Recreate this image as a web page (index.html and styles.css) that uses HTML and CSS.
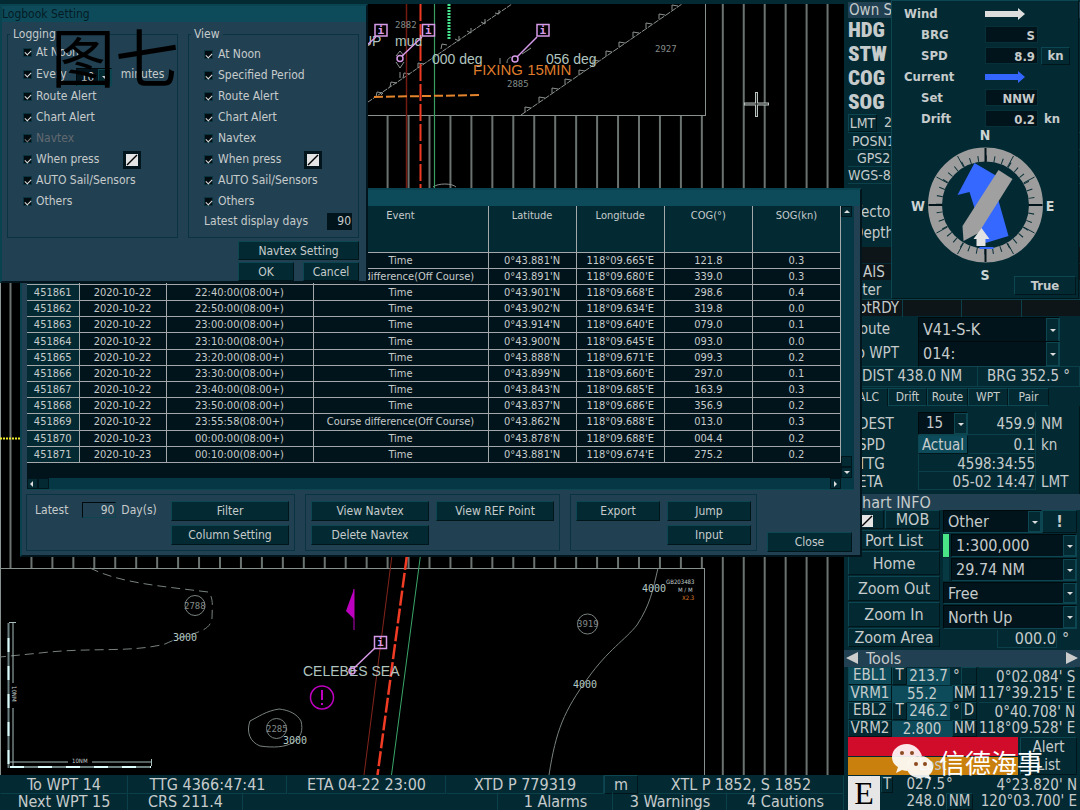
FILE: index.html
```html
<!DOCTYPE html>
<html lang="en">
<head>
<meta charset="utf-8">
<title>ECDIS</title>
<link rel="stylesheet" href="styles.css">
</head>
<body>
<div class="app">
  <main class="chart">
    <svg class="chart-map" viewBox="0 0 844 775" preserveAspectRatio="xMinYMin slice" aria-label="Chart">
      <defs>
        <pattern id="hatch" x="9.5" y="0" width="20.95" height="10" patternUnits="userSpaceOnUse"><path d="M1 0V10" stroke="#a3b0ac" stroke-width="1.300"/></pattern>
      </defs>
      <rect width="844" height="775" fill="#000"/>
      <rect y="4" width="842" height="771" fill="url(#hatch)"/>
      <path d="M.5 4V775" stroke="#8a9794"/>
      <rect x="-2" y="3.500" width="707.500" height="112" fill="#000" stroke="#87918f"/>
      <rect x=".5" y="568.500" width="704" height="210" fill="#000" stroke="#87918f"/>
      <path d="M0 438.500H20" stroke="#f2ee2b" stroke-width="2" stroke-dasharray="2 1"/>
      <g fill="none" stroke="#8b9290" stroke-width="1">
        <path d="M368 102L512 4" stroke-dasharray="5 1"/>
        <path d="M376 97l1-5 6 1-2 2M390 87l1-5 6 1M403 78l1-5 6 1M418 68l0-5 6 1M441 49l1-5 5 1M455 39l4 2 0-5M467 31l4 2 0-5M481 22l4 2 0-5M495 13l4 1 0-4"/>
        <path d="M521 115L682 4" stroke-dasharray="6 1"/>
        <path d="M525 112l0-5 6 1M539 102l0-5 6 1M552 93l0-5 6 1M565 84l0-5 6 1M579 75l0-5 6 1M593 65l0-5 6 1M606 56l0-5 6 1M619 47l0-5 6 1M633 37l0-5 6 1M646 28l0-5 6 1M659 19l0-5 6 1M672 10l0-5 6 1"/>
        <path d="M433 187C438 183 452 183 456 187M396 56l4-5 4 5M396 62l4 6 4-6M400 72V78M507 63c0-4 2-5 4-6M522 54l9-6M500 58v6"/>
      </g>
      <path d="M406.500 4V188" stroke="#731a13" stroke-width="1.500"/>
      <path d="M420.500 4V188" stroke="#ef3a23" stroke-width="2" stroke-dasharray="17 3"/>
      <path d="M434.500 4V188" stroke="#3a9d61" stroke-width="1.200"/>
      <path d="M449 4V40" stroke="#44e58c" stroke-width="3" stroke-dasharray="2 1"/>
      <path d="M374 97L479 95" stroke="#e4842d" stroke-width="2" stroke-dasharray="9 3"/>
      <g class="map-depth"><text x="395" y="28">2882</text><text x="507" y="87">2885</text><text x="655" y="52">2927</text></g>
      <g class="map-label"><text x="362" y="46">UP</text><text x="395" y="46">mud</text><text x="432" y="64">000 deg</text><text x="546" y="64">056 deg</text></g>
      <text class="map-fix" x="473" y="75">FIXING 15MIN</text>
      <g fill="none" stroke="#d69ae8" stroke-width="1.500">
        <path d="M367 45L376 37M402 56L422 37M517 57L537 37"/>
        <rect x="375" y="24.500" width="12" height="11.500"/><rect x="422.500" y="24.500" width="12" height="11.500"/><rect x="537" y="24.500" width="12" height="11.500"/>
        <circle cx="400" cy="58.500" r="3"/><circle cx="515" cy="59" r="3"/>
      </g>
      <g class="map-info"><text x="377.500" y="34">i</text><text x="425" y="34">i</text><text x="539.500" y="34">i</text></g>
      <path d="M744 104H769M756.500 92V117" stroke="#b9c4c1" stroke-width="3"/><path d="M745 104H768M756.500 93V116" stroke="#222"/>

      <g fill="none" stroke="#78827f">
        <path d="M90 568C120 583 160 586 208 592C214 597 212 608 212 618C210 634 190 632 165 644C130 653 90 647 40 653L0 657" stroke-dasharray="9 5"/>
        <circle cx="195" cy="605.500" r="10"/><circle cx="276.500" cy="728.500" r="10"/><circle cx="587.500" cy="624" r="10"/>
        <path d="M279 709C266 711 258 717 250 721C246 732 250 742 260 746C274 748 285 747 292 743C302 737 303 730 301 721C297 714 289 710 279 709Z"/>
        <path d="M658 568C653 590 650 605 637 625C625 640 608 650 588 678C564 711 556 730 549 775"/>
      </g>
      <path d="M392 555L364 775" stroke="#83251b"/>
      <path d="M407 555L377.500 775" stroke="#f03b25" stroke-width="2.500" stroke-dasharray="15 3"/>
      <path d="M420.500 555L391.500 775" stroke="#3aa66a"/>
      <g class="map-depth"><text x="184" y="609">2788</text><text x="266" y="732">2285</text><text x="577" y="627">3919</text></g>
      <g class="map-contour"><text x="173" y="641">3000</text><text x="283" y="744">3000</text><text x="642" y="592">4000</text><text x="573" y="688">4000</text></g>
      <g class="map-cell"><text x="666" y="584">GB203483</text><text x="678" y="592">M / M</text><text x="682" y="600" class="map-scale">X2.3</text></g>
      <text class="map-label map-sea" x="303" y="676">CELEBES SEA</text>
      <g fill="none" stroke="#d69ae8" stroke-width="1.500"><path d="M353 669L375 648"/><rect x="374.500" y="636.500" width="12" height="12"/><circle cx="352" cy="671" r="3"/></g>
      <text class="map-info" x="377" y="646">i</text>
      <path d="M354 589L346 611L354 619Z" fill="#bd00c0"/><path d="M354 589V630" stroke="#bd00c0"/>
      <g fill="none" stroke="#bd00c0" stroke-width="1.500"><circle cx="322" cy="697.500" r="11.500"/><path d="M322 690V700M322 703V705" stroke-width="2"/></g>
      <g stroke="#a7bdbc" fill="none">
        <path d="M8.500 623V768" stroke="#6c8080" stroke-width="2"/><path d="M8.500 638V768" stroke="#dff" stroke-width="2" stroke-dasharray="14 14"/>
        <path d="M9 622.500H16M13 623V683M13 708V768M9 762H68M92 762H151M151.500 759V766"/>
        <path d="M10 767H151" stroke="#6c8080" stroke-width="2"/><path d="M10 767H151" stroke="#dff" stroke-width="2" stroke-dasharray="14 14"/>
      </g>
      <g class="map-cell"><text x="72" y="763">10NM</text><text transform="translate(12 686) rotate(90)">10NM</text></g>
    </svg>
  </main>

  <aside class="side">
    <h2 class="head own">Own Ship</h2>
    <div class="motion"><b>HDG</b><b>STW</b><b>COG</b><b>SOG</b></div>
    <div class="line lmt"><button>LMT</button><span>2020</span></div>
    <div class="line in8">POSN1</div>
    <div class="line in13">GPS2</div>
    <div class="line">WGS-84</div>
    <div class="line gap in8">Vector</div>
    <div class="line in8 depth">Depth</div>
    <div class="dark"></div>
    <div class="dark ais">AIS</div>
    <div class="line filter">Filter</div>
    <div class="dark ready"><span>NotRDY</span><i></i><i></i><i></i></div>
    <div class="pick"><label for="route">Route</label><span class="sel"><select id="route"><option>V41-S-K</option></select></span></div>
    <div class="pick"><label for="wpt">To WPT</label><span class="sel"><select id="wpt"><option>014:</option></select></span></div>
    <div class="dist"><span>DIST 438.0 NM</span><span>BRG 352.5 °</span></div>
    <nav class="tabs"><button class="on">CALC</button><button>Drift</button><button>Route</button><button>WPT</button><button>Pair</button></nav>
    <section class="calc">
      <label for="dest">DEST</label><span class="sel"><select id="dest"><option>15</option></select></span><output class="first">459.9</output><span class="first">NM</span>
      <span class="name">SPD</span><button class="actual">Actual</button><output>0.1</output><span>kn</span>
      <span class="name">TTG</span><output class="wide">4598:34:55</output><span></span>
      <span class="name">ETA</span><output class="wide">05-02 14:47</output><span>LMT</span>
    </section>
    <h2 class="head">Chart INFO</h2>
    <section class="info">
      <div class="info-left">
        <div class="mob"><button aria-label="Note"><svg width="12" height="12" viewBox="0 0 12 12"><rect width="12" height="12" fill="#e4e4e4"/><path d="M1 11L11 1" stroke="#000" stroke-width="1.500"/></svg></button><button>MOB</button></div>
        <button>Port List</button><button>Home</button><button>Zoom Out</button><button>Zoom In</button><button>Zoom Area</button>
      </div>
      <div class="info-right">
        <div class="pair"><span class="sel"><select aria-label="Layer"><option>Other</option></select></span><button class="bang">!</button></div>
        <div class="scale on"><span class="sel"><select aria-label="Scale"><option>1:300,000</option></select></span></div>
        <div class="scale"><span class="sel"><select aria-label="Range"><option>29.74 NM</option></select></span></div>
        <span class="sel"><select aria-label="Motion"><option>Free</option></select></span>
        <span class="sel"><select aria-label="Orientation"><option>North Up</option></select></span>
        <div class="heading"><output>000.0</output><span>°</span></div>
      </div>
    </section>
    <div class="tools"><button aria-label="Previous"><svg width="12" height="12" viewBox="0 0 12 12"><path d="M0 6L12 0V12Z" fill="#ccc"/></svg></button><h2>Tools</h2><button aria-label="Next"><svg width="12" height="12" viewBox="0 0 12 12"><path d="M12 6L0 0V12Z" fill="#ccc"/></svg></button></div>
    <section class="ebl">
      <div class="ebl-rows">
        <div class="e-row"><button class="lit">EBL1</button><button>T</button><output class="lit">213.7</output><span>°</span><button aria-label="Mode"></button></div>
        <div class="v-row"><button class="lit">VRM1</button><output class="lit">55.2</output><button>NM</button></div>
        <div class="e-row"><button>EBL2</button><button>T</button><output class="lit">246.2</output><span>°</span><button>D</button></div>
        <div class="v-row"><button>VRM2</button><output class="lit">2.800</output><button>NM</button></div>
      </div>
      <div class="pos"><p>0°02.084' S<br>117°39.215' E</p><p>0°40.708' N<br>118°09.528' E</p></div>
    </section>
    <section class="alert"><div class="bars"><div class="red"></div><div class="amber">Lost</div></div><button>Alert<br>List</button></section>
    <section class="cursor"><b>E</b><div class="cur-val"><div><button>T</button><output>027.5</output><span>°</span></div><div><output>248.0</output><button>NM</button></div></div><p>4°23.820' N<br>120°03.700' E</p></section>
  </aside>

  <footer class="status">
    <div class="st-one"><span>To WPT 14</span><span>TTG 4366:47:41</span><span>ETA 04-22 23:00</span><span>XTD P 779319</span><button>m</button><span>XTL P 1852, S 1852</span></div>
    <div class="st-two"><span>Next WPT 15</span><span>CRS 211.4</span><span></span><span>1 Alarms</span><span>3 Warnings</span><span>4 Cautions</span></div>
  </footer>

  <section class="win logbook" aria-label="Logbook">
    <div class="win-title"></div>
    <div class="grid-box">
      <div class="grid-area">
        <table>
          <colgroup><col class="c-no"><col class="c-date"><col class="c-time"><col class="c-event"><col><col><col><col></colgroup>
          <thead><tr><th>No.</th><th>Date</th><th>Time</th><th>Event</th><th>Latitude</th><th>Longitude</th><th>COG(°)</th><th>SOG(kn)</th></tr></thead>
          <tbody>
            <tr><th>451859</th><td>2020-10-22</td><td>22:30:00(08:00+)</td><td>Time</td><td>0°43.881'N</td><td>118°09.665'E</td><td>121.8</td><td>0.3</td></tr>
            <tr><th>451860</th><td>2020-10-22</td><td>22:35:00(08:00+)</td><td>Course difference(Off Course)</td><td>0°43.891'N</td><td>118°09.680'E</td><td>339.0</td><td>0.3</td></tr>
            <tr><th>451861</th><td>2020-10-22</td><td>22:40:00(08:00+)</td><td>Time</td><td>0°43.901'N</td><td>118°09.668'E</td><td>298.6</td><td>0.4</td></tr>
            <tr><th>451862</th><td>2020-10-22</td><td>22:50:00(08:00+)</td><td>Time</td><td>0°43.902'N</td><td>118°09.634'E</td><td>319.8</td><td>0.0</td></tr>
            <tr><th>451863</th><td>2020-10-22</td><td>23:00:00(08:00+)</td><td>Time</td><td>0°43.914'N</td><td>118°09.640'E</td><td>079.0</td><td>0.1</td></tr>
            <tr><th>451864</th><td>2020-10-22</td><td>23:10:00(08:00+)</td><td>Time</td><td>0°43.900'N</td><td>118°09.645'E</td><td>093.0</td><td>0.0</td></tr>
            <tr><th>451865</th><td>2020-10-22</td><td>23:20:00(08:00+)</td><td>Time</td><td>0°43.888'N</td><td>118°09.671'E</td><td>099.3</td><td>0.2</td></tr>
            <tr><th>451866</th><td>2020-10-22</td><td>23:30:00(08:00+)</td><td>Time</td><td>0°43.899'N</td><td>118°09.660'E</td><td>297.0</td><td>0.1</td></tr>
            <tr><th>451867</th><td>2020-10-22</td><td>23:40:00(08:00+)</td><td>Time</td><td>0°43.843'N</td><td>118°09.685'E</td><td>163.9</td><td>0.3</td></tr>
            <tr><th>451868</th><td>2020-10-22</td><td>23:50:00(08:00+)</td><td>Time</td><td>0°43.837'N</td><td>118°09.686'E</td><td>356.9</td><td>0.2</td></tr>
            <tr><th>451869</th><td>2020-10-22</td><td>23:55:58(08:00+)</td><td>Course difference(Off Course)</td><td>0°43.862'N</td><td>118°09.688'E</td><td>013.0</td><td>0.3</td></tr>
            <tr><th>451870</th><td>2020-10-23</td><td>00:00:00(08:00+)</td><td>Time</td><td>0°43.878'N</td><td>118°09.688'E</td><td>004.4</td><td>0.2</td></tr>
            <tr><th>451871</th><td>2020-10-23</td><td>00:10:00(08:00+)</td><td>Time</td><td>0°43.881'N</td><td>118°09.674'E</td><td>275.2</td><td>0.2</td></tr>
          </tbody>
        </table>
        <div class="vbar"><i class="up"></i><i class="thumb"></i><i class="down"></i></div>
      </div>
      <div class="hbar"><i class="left"></i><i class="thumb"></i><i class="right"></i></div>
    </div>
    <div class="actions">
      <div class="group g-filter"><label for="days">Latest</label><input id="days" class="days" value="90"><span>Day(s)</span><div class="stack"><button>Filter</button><button>Column Setting</button></div></div>
      <div class="group g-view"><div class="stack"><button>View Navtex</button><button>Delete Navtex</button></div><div class="stack"><button>View REF Point</button></div></div>
      <div class="group g-out"><div class="stack"><button>Export</button></div><div class="stack"><button>Jump</button><button>Input</button></div></div>
      <button class="close">Close</button>
    </div>
  </section>

  <section class="win setting" aria-label="Logbook Setting">
    <h2 class="win-title">Logbook Setting</h2>
    <div class="sets">
      <fieldset class="logging">
        <legend>Logging</legend>
        <label><input type="checkbox" checked>At Noon</label>
        <div class="every"><label><input type="checkbox" checked>Every</label><span class="sel mini"><select aria-label="Interval"><option>10</option></select></span><span>minutes</span></div>
        <label><input type="checkbox" checked>Route Alert</label>
        <label><input type="checkbox" checked>Chart Alert</label>
        <label class="off"><input type="checkbox" checked disabled>Navtex</label>
        <label class="press"><input type="checkbox" checked>When press<svg width="18" height="18" viewBox="0 0 18 18"><rect width="18" height="18" fill="#02151c"/><rect x="3" y="3" width="12" height="12" fill="#e4e4e4"/><path d="M4 14L14 4" stroke="#000" stroke-width="1.500"/></svg></label>
        <label><input type="checkbox" checked>AUTO Sail/Sensors</label>
        <label><input type="checkbox" checked>Others</label>
      </fieldset>
      <fieldset class="view">
        <legend>View</legend>
        <label><input type="checkbox" checked>At Noon</label>
        <label><input type="checkbox" checked>Specified Period</label>
        <label><input type="checkbox" checked>Route Alert</label>
        <label><input type="checkbox" checked>Chart Alert</label>
        <label><input type="checkbox" checked>Navtex</label>
        <label class="press"><input type="checkbox" checked>When press<svg width="18" height="18" viewBox="0 0 18 18"><rect width="18" height="18" fill="#02151c"/><rect x="3" y="3" width="12" height="12" fill="#e4e4e4"/><path d="M4 14L14 4" stroke="#000" stroke-width="1.500"/></svg></label>
        <label><input type="checkbox" checked>AUTO Sail/Sensors</label>
        <label><input type="checkbox" checked>Others</label>
        <label class="latest">Latest display days<input value="90"></label>
      </fieldset>
    </div>
    <div class="set-btns"><button class="full">Navtex Setting</button><button>OK</button><button>Cancel</button></div>
  </section>

  <section class="wind" aria-label="Wind and current">
    <div class="w-grid">
      <b>Wind</b><svg width="40" height="12" viewBox="0 0 40 12"><path d="M0 3H33V0L40 6L33 12V9H0Z" fill="#ddd"/></svg><span></span>
      <b class="sub">BRG</b><output>S</output><span></span>
      <b class="sub">SPD</b><output>8.9</output><button>kn</button>
      <b>Current</b><svg width="40" height="12" viewBox="0 0 40 12"><path d="M0 3H33V0L40 6L33 12V9H0Z" fill="#3366ff"/></svg><span></span>
      <b class="sub">Set</b><output>NNW</output><span></span>
      <b class="sub">Drift</b><output>0.2</output><b class="unit">kn</b>
    </div>
    <svg class="compass" viewBox="0 0 186 154" aria-label="Compass">
      <g transform="translate(93.500 77)">
        <circle r="50.500" fill="none" stroke="#9d9d9d" stroke-width="14"/>
        <circle r="46.500" fill="none" stroke="#0b3037" stroke-width="6" stroke-dasharray="1 7.116"/>
        <g stroke="#0b3037"><path d="M22 -38L28 -49M38 -22L49 -28M22 38L28 49M38 22L49 28M-22 38L-28 49M-38 22L-49 28M-22 -38L-28 -49M-38 -22L-49 -28"/></g>
        <path d="M0 -57V-43M0 57V43M-57 0H-43M57 0H43" stroke="#02141b" stroke-width="2"/>
        <path d="M-11 -42L18 -25L8 -22L23 31L0 38L-16 -13L-28 -10ZM-6 42H8V44H-6Z" fill="#3568ff"/>
        <path d="M13 -35L27 -26L-7 28L-22 36L-23 21Z" fill="#a0a0a0"/>
        <path d="M-4 23L4 34H0V41H-9V34H-12Z" fill="#e2e2e2"/>
      </g>
      <g class="card"><text x="93" y="12">N</text><text x="26" y="83">W</text><text x="158" y="83">E</text><text x="93" y="152">S</text></g>
    </svg>
    <button class="true">True</button>
  </section>

  <div class="stamp" lang="zh">图七</div>
  <div class="brand" lang="zh"><svg width="44" height="37" viewBox="0 0 44 37"><g fill="#fff" fill-opacity=".9"><path d="M16 1C7 1 1 7 1 14C1 18 3 22 7 24L5 30L11 27Q14 28 17 28C15 20 20 13 31 13C29 6 23 1 16 1Z"/><path d="M29 13C21 13 16 18 16 24C16 31 22 35 29 35Q32 35 34 34L40 37L38 32C41 30 42 27 42 24C42 18 36 13 29 13Z"/></g><g fill="#8c4a20"><circle cx="11" cy="10" r="2"/><circle cx="21" cy="10" r="2"/><circle cx="25" cy="21" r="2"/><circle cx="34" cy="21" r="2"/></g></svg><span>信德海事</span></div>
</div>
</body>
</html>
```

FILE: styles.css
```css
:root {
  --panel: #032a33;
  --deep: #02141b;
  --slate: #214052;
  --teal: #0d4b5b;
  --edge: #0b3f49;
  --text: #c6cbcb;
}
* { box-sizing: border-box; }
body { margin: 0; background: #000; color: var(--text); font: 16px/17px "DejaVu Sans Condensed", "Noto Sans", sans-serif; }
h2, p { margin: 0; font: inherit; }
i { font-style: normal; }
button {
  margin: 0; padding: 0; border: 1px solid; border-color: #0c4651 #01161b #01161b #0c4651;
  background: var(--panel); color: inherit; font: inherit; white-space: nowrap; overflow: hidden;
}
input, select { font: inherit; color: inherit; margin: 0; }
output { display: block; text-align: right; }
.app {
  position: relative; min-height: 100vh; overflow: hidden; background: var(--panel);
  display: grid; grid-template-columns: minmax(0, 1fr) 236px; grid-template-rows: minmax(0, 1fr) 35px;
}
.chart { position: relative; overflow: hidden; border-top: 4px solid var(--panel); }
.chart-map { position: absolute; left: 0; top: -4px; width: 844px; height: 775px; }
.map-depth { font: 9px "DejaVu Sans Mono", monospace; fill: #838b89; }
.map-contour { font: 10px "DejaVu Sans Mono", monospace; fill: #b4c8c4; }
.map-label { font: 14px "Liberation Sans", sans-serif; fill: #b0c4bf; }
.map-fix { font: 15px "Liberation Sans", sans-serif; fill: #df7b2b; }
.map-info { font: bold 11px "DejaVu Sans Mono", monospace; fill: #d69ae8; }
.map-cell { font: 6px "DejaVu Sans Condensed", sans-serif; fill: #c0cccb; }
.map-scale { fill: #df7b2b; }

/* drop-downs */
.sel { position: relative; display: block; min-width: 0; background: var(--deep); border: 1px solid; border-color: #00090c #0d4651 #0d4651 #00090c; }
.sel select { display: block; width: 100%; height: 100%; padding: 0 12px 0 4px; border: 0; background: none; appearance: none; }
.sel::before { content: ""; position: absolute; right: 0; top: 0; bottom: 0; width: 11px; background: var(--panel); border: 1px solid #0c4651; pointer-events: none; }
.sel::after { content: ""; position: absolute; right: 3px; top: 50%; margin-top: -1px; border: 3px solid transparent; border-top-color: #ddd; border-bottom: 0; pointer-events: none; }

/* right-hand column */
.side { grid-row: 1 / 3; grid-column: 2; display: flex; flex-direction: column; padding-left: 4px; border-top: 2px solid var(--panel); background: var(--panel); overflow: hidden; white-space: nowrap; }
.side > * { flex: none; }
.head { height: 16px; line-height: 17px; background: var(--slate); padding-left: 4px; }
.own { padding-left: 1px; font-size: 15px; line-height: 16px; }
.motion { display: grid; grid-auto-rows: 24px; font: bold 21px/24px "Liberation Sans Narrow", "Roboto Condensed", sans-serif; }
.line { height: 17px; line-height: 17px; font-size: 14px; border-bottom: 1px solid var(--edge); }
.in8 { padding-left: 4px; } .in13 { padding-left: 9px; }
.lmt { display: flex; gap: 7px; height: 19px; }
.lmt button { width: 29px; }
.gap { margin-top: 20px; height: 20px; font-size: 15px; border: 0; }
.depth { height: 21px; font-size: 15px; line-height: 18px; border: 0; }
.gap, .depth { padding-left: 5px; }
.dark { height: 16px; margin-top: 2px; background: #0d1519; }
.ais { padding-left: 15px; margin-top: 1px; font-size: 15px; }
.filter { height: 20px; font-size: 15px; line-height: 21px; }
.ready { display: grid; grid-template-columns: 54px 1fr 1fr 1fr; margin: 0; line-height: 17px; }
.ready i { border-left: 1px solid var(--edge); }
.ready span { text-align: right; padding-right: 3px; font-size: 15px; }
.pick { display: grid; grid-template-columns: 70px 1fr 20px; height: 24px; line-height: 24px; padding: 1px 0; }
.pick label { padding-left: 3px; font-size: 15px; }
.dist { display: grid; grid-template-columns: 130px 1fr; height: 20px; margin-top: 2px; line-height: 19px; font-size: 15px; }
.dist span { padding-left: 14px; border: 1px solid var(--edge); border-left-width: 0; }
.dist span + span { padding-left: 9px; }
.tabs { display: grid; grid-template-columns: 40px 39px 41px 40px 41px; height: 18px; margin-top: 2px; font-size: 12px; }
.tabs button { border-bottom-color: #0c4651; }
.tabs .on { text-align: right; padding-right: 8px; border-bottom: 0; }
.calc { display: grid; grid-template-columns: 70px 50px 68px 1fr; grid-template-rows: 23px 19px 18px 18px; height: 88px; padding-top: 6px; line-height: 21px; font-size: 15px; border-right: 1px solid #01161b; }
.calc > label, .calc > .name { padding-left: 10px; }
.calc > label, .calc > .first { line-height: 25px; }
.calc > span { padding-left: 5px; }
.calc > span.sel { padding: 0; }
.calc .sel select { padding-left: 7px; }
.calc output { border: 1px solid var(--edge); border-width: 0 1px 1px 0; height: 100%; }
.calc .wide { grid-column: 2 / 4; border-left-width: 1px; }
.calc .wide, .calc .wide + span, .calc .name { line-height: 20px; }
.calc .actual { background: var(--teal); line-height: 16px; }
.info { display: grid; grid-template-columns: 92px 1fr; gap: 3px; height: 140px; padding-right: 3px; }
.info-left { display: grid; grid-template-rows: 19px 20px 24px 25px 25px 19px; row-gap: 1px; }
.mob { display: grid; grid-template-columns: 36px 1fr; gap: 1px; }
.mob button:first-child { text-align: right; padding-right: 10px; }
.mob svg { vertical-align: -2px; }
.info-right { display: grid; grid-template-rows: 23px 23px 23px 22px 24px 16px; row-gap: 1px; }
.pair { display: grid; grid-template-columns: 1fr 35px; }
.bang { font-weight: bold; }
.scale { border-left: 6px solid #073943; padding-left: 2px; display: grid; }
.scale.on { border-color: #49e587; }
.heading { display: grid; grid-template-columns: 1fr 20px; padding-left: 54px; line-height: 17px; }
.heading output { border: 1px solid var(--edge); border-top: 0; }
.heading span { padding-left: 5px; }
.tools { display: grid; grid-template-columns: 16px 1fr 16px; height: 17px; margin-left: -4px; background: var(--slate); }
.tools button { border: 0; background: none; }
.tools h2 { padding-left: 6px; line-height: 17px; }
.ebl { display: grid; grid-template-columns: 129px 1fr; grid-template-rows: 100%; height: 70px; gap: 2px; padding-right: 5px; }
.ebl-rows { display: grid; grid-template-rows: repeat(4, minmax(0, 1fr)); font-size: 15px; line-height: 18px; }
.ebl-rows > div { display: grid; grid-template-rows: 100%; }
.ebl-rows button { line-height: 15px; }
.e-row { grid-template-columns: 44px 15px 43px 11px 1fr; }
.v-row { grid-template-columns: 44px 60px 1fr; }
.ebl .lit { background: var(--teal); text-align: center; }
output.lit { border-top: 1px solid var(--panel); line-height: 17px; }
.ebl-rows span { padding-left: 3px; }
.pos { display: grid; grid-template-rows: 1fr 1fr; text-align: right; font-size: 15px; line-height: 16px; }
.pos p { border-top: 1px solid var(--edge); padding-top: 1px; }
.alert { display: grid; grid-template-columns: 170px 1fr; grid-template-rows: 100%; gap: 2px; height: 38px; padding-right: 3px; }
.alert button { font-size: 15px; line-height: 18px; }
.bars { display: grid; grid-template-rows: 1fr 1fr; gap: 1px; text-align: center; font-size: 15px; }
.red { background: #d10c2b; } .amber { background: #ca800d; }
.cursor { display: grid; grid-template-columns: 32px 93px 1fr; gap: 1px; height: 34px; margin-top: 1px; font-size: 15px; line-height: 17px; padding-right: 3px; }
.cursor > b { background: #e6e6e6; color: #000; font: 32px/34px "Liberation Serif", serif; text-align: center; }
.cursor p { text-align: right; line-height: 16px; padding-top: 1px; }
.cur-val > div { display: grid; grid-template-columns: 12px 51px 27px; gap: 1px; height: 17px; }
.cur-val > div > output { grid-column: 2; }
.cur-val button { line-height: 15px; }

/* bottom bar */
.status { background: var(--panel); display: grid; grid-template-rows: 17px 18px; text-align: center; line-height: 19px; }
.status > div { display: grid; }
.status span, .status button { border: 1px solid; border-color: transparent var(--edge) var(--edge) transparent; line-height: 17px; }
.st-one { grid-template-columns: 128fr 159fr 159fr 158fr 34fr 206fr; }
.st-two { grid-template-columns: 128fr 115fr 255fr 115fr 114fr 117fr; }
.st-one button { border-color: #0c4651 #01161b #01161b #0c4651; line-height: 14px; }

/* floating windows */
.win { position: absolute; background: var(--slate); border: 2px solid; border-color: #0a4350 #02151c #02151c #0a4350; font-size: 12px; line-height: 15px; }
.win-title { height: 16px; background: var(--teal); }
.logbook { left: 20px; right: 218px; top: 188px; padding: 0 5px 4px; }
.logbook .win-title { margin: 0 -5px; }
.grid-box { margin-right: 1px; background: var(--deep); border-bottom: 1px solid #0c4651; }
.grid-area { display: grid; grid-template-columns: 1fr 13px; }
table { width: 100%; table-layout: fixed; border-collapse: collapse; height: 257px; margin-bottom: 15px; font-size: 11px; line-height: 13px; }
th, td { padding: 0; border: 1px solid #a3a9aa; text-align: center; font-weight: normal; white-space: nowrap; overflow: hidden; }
tr > :first-child { border-left: 0; }
th { background: var(--panel); }
thead th { height: 46px; vertical-align: top; padding-top: 3px; border-top: 0; }
.c-no { width: 52px; } .c-date { width: 87px; } .c-time { width: 147px; } .c-event { width: 175px; }
.vbar, .hbar { display: flex; background: #053844; }
.vbar { flex-direction: column; }
.vbar i, .hbar i { width: 11px; height: 11px; background: var(--panel); border: 1px solid #00161c; position: relative; }
.vbar .thumb { margin-top: auto; }
.hbar .right { margin: 0 13px 0 auto; }
.up::after, .down::after, .left::after, .right::after { content: ""; position: absolute; left: 2px; top: 3px; border: 3px solid transparent; }
.up::after { border-bottom-color: #ddd; border-top: 0; }
.down::after { border-top-color: #ddd; border-bottom: 0; }
.left::after { top: 2px; border-right-color: #ddd; border-left: 0; }
.right::after { top: 2px; left: 3px; border-left-color: #ddd; border-right: 0; }
.actions { display: flex; gap: 10px; padding: 4px 3px 0 0; margin-left: -1px; }
.group { display: flex; align-items: flex-start; gap: 7px; height: 57px; padding: 6px 5px; border: 1px solid #0a3341; }
.g-filter { width: 269px; padding-left: 8px; gap: 5px; line-height: 18px; }
.g-view { width: 255px; }
.g-out { width: 187px; }
.stack { flex: 1; display: grid; gap: 4px; }
.g-filter .stack { flex: 0 0 118px; margin-left: auto; }
.stack button, .close { height: 20px; line-height: 17px; }
.days { width: 34px; height: 16px; margin: 1px 0 0 9px; padding: 0 1px; text-align: right; background: none; border: 1px solid; border-color: #00090c #0d4651 #0d4651 #00090c; }
.close { flex: 1; align-self: flex-end; margin-bottom: -1px; }

.setting { left: 0; top: 4px; width: 368px; padding: 0 7px 0 5px; }
.setting .win-title { margin: 0 -7px 0 -5px; line-height: 16px; color: #051c24; }
.sets { display: grid; grid-template-columns: 1fr 1fr; gap: 10px; padding-top: 5px; }
fieldset { min-width: 0; margin: 0; padding: 3px 5px 0 15px; border: 1px solid #0a3341; height: 211px; display: grid; align-content: start; grid-auto-rows: 21px; }
fieldset.logging { padding-top: 0; grid-template-rows: 22px 22px 22px; }
legend { padding: 0 3px; margin-left: -13px; line-height: 14px; }
fieldset label { display: flex; align-items: center; gap: 4px; white-space: nowrap; }
fieldset.view label { gap: 5px; }
.off { color: #626970; }
.press svg { margin-left: 20px; }
.view .press svg { margin-left: 18px; }
input[type="checkbox"] { appearance: none; width: 9px; height: 9px; background: #020c11; border: 1px solid #0a343f; display: grid; place-items: center; }
input[type="checkbox"]::after { content: ""; width: 5px; height: 3px; border: solid #ddd; border-width: 0 0 1px 1px; transform: rotate(-45deg); }
.off input[type="checkbox"]::after { border-color: #777; }
.every { display: flex; align-items: center; gap: 9px; }
.mini { width: 36px; height: 18px; margin-top: 6px; }
.sel.mini select { padding: 0 12px 0 4px; }
.view .latest { margin: -3px 1px 0 0; justify-content: space-between; }
.latest input { width: 25px; height: 17px; padding: 0 1px; border: 0; background: var(--deep); text-align: right; }
.set-btns { display: grid; grid-template-columns: 56px 56px; column-gap: 9px; row-gap: 2px; justify-content: end; padding-top: 3px; }
.set-btns button { height: 19px; line-height: 16px; }
.set-btns .full { grid-column: 1 / 3; }

.wind { position: absolute; right: 1px; top: 0; width: 188px; background: var(--panel); border: 1px solid; border-color: #0c4651 #01161b #01161b #0c4651; padding: 3px 2px 3px 0; font: bold 13px/19px "DejaVu Sans Condensed", sans-serif; }
.w-grid { display: grid; grid-template-columns: 81px 53px 1fr; grid-auto-rows: 19px; row-gap: 2px; padding-left: 12px; align-items: center; }
.w-grid output { background: var(--deep); height: 17px; line-height: 17px; padding-right: 2px; border: 1px solid #073039; }
.sub { padding-left: 17px; }
.w-grid button { width: 29px; height: 18px; margin-left: 3px; line-height: 16px; }
.unit { padding-left: 6px; }
.compass { display: block; width: 186px; height: 154px; }
.card { font: bold 14px "DejaVu Sans Condensed", sans-serif; fill: #ccd3d3; text-anchor: middle; }
.true { display: block; width: 62px; height: 19px; margin: -6px 0 0 auto; line-height: 17px; }

.stamp { position: absolute; left: 51px; top: 17px; font: 64px/74px "Noto Sans CJK SC", sans-serif; color: #000; pointer-events: none; }
.brand { position: absolute; right: 37px; bottom: 30px; display: flex; align-items: center; gap: 4px; font: 26px/37px "Noto Sans CJK SC", sans-serif; color: #fff; pointer-events: none; }
```
